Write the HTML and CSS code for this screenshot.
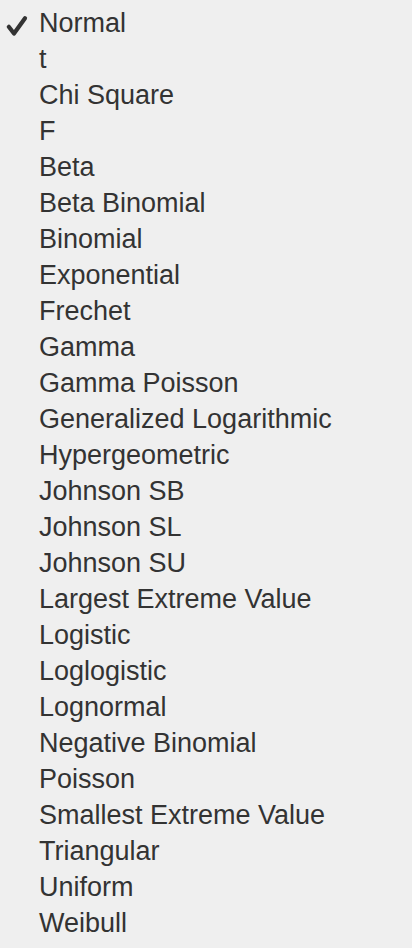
FILE: index.html
```html
<!DOCTYPE html>
<html>
<head>
<meta charset="utf-8">
<link rel="stylesheet" href="styles.css">
</head>
<body>
<ul class="menu">
  <li class="item checked"><svg class="check" width="24" height="24" viewBox="0 0 24 24"><path d="M3.8 12.8 L9 19.5 L20 4.2" fill="none" stroke="#333333" stroke-width="4.2" stroke-linecap="round" stroke-linejoin="round"/></svg>Normal</li>
  <li class="item">t</li>
  <li class="item">Chi Square</li>
  <li class="item">F</li>
  <li class="item">Beta</li>
  <li class="item">Beta Binomial</li>
  <li class="item">Binomial</li>
  <li class="item">Exponential</li>
  <li class="item">Frechet</li>
  <li class="item">Gamma</li>
  <li class="item">Gamma Poisson</li>
  <li class="item">Generalized Logarithmic</li>
  <li class="item">Hypergeometric</li>
  <li class="item">Johnson SB</li>
  <li class="item">Johnson SL</li>
  <li class="item">Johnson SU</li>
  <li class="item">Largest Extreme Value</li>
  <li class="item">Logistic</li>
  <li class="item">Loglogistic</li>
  <li class="item">Lognormal</li>
  <li class="item">Negative Binomial</li>
  <li class="item">Poisson</li>
  <li class="item">Smallest Extreme Value</li>
  <li class="item">Triangular</li>
  <li class="item">Uniform</li>
  <li class="item">Weibull</li>
</ul>
</body>
</html>
```
FILE: styles.css
```css
html, body {
  margin: 0;
  padding: 0;
  background: #efefef;
  height: 100%;
}
body {
  font-family: "Liberation Sans", Arial, sans-serif;
  color: #333333;
}
.menu {
  list-style: none;
  margin: 0;
  padding: 5px 0 0 39px;
}
.item {
  position: relative;
  font-size: 27px;
  line-height: 36px;
  height: 36px;
  white-space: nowrap;
}
.check {
  position: absolute;
  left: -34px;
  top: 9px;
}
```
